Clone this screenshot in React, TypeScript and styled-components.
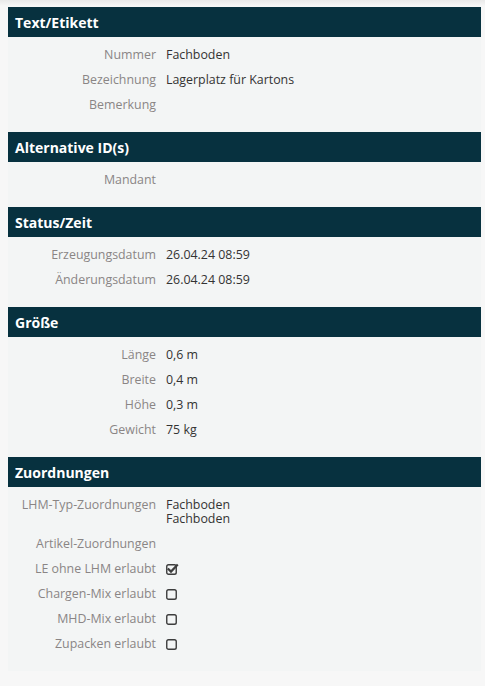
import styled, { createGlobalStyle } from "styled-components";

const GlobalStyle = createGlobalStyle`
  html, body {
    margin: 0;
    padding: 0;
  }
  body {
    background: linear-gradient(#e9e9e9 0px, #f7f7f7 6px, #f7f7f7 100%);
    font-family: "Open Sans", "Noto Sans", sans-serif;
    min-height: 100vh;
  }
`;

const Page = styled.div`
  padding: 7px 4px 0 8px;
`;

const Panel = styled.section`
  background: #f3f5f5;
`;

const Header = styled.h2`
  margin: 0;
  height: 30px;
  display: flex;
  align-items: center;
  padding: 0 7px;
  background: #07313f;
  color: #ffffff;
  font-size: 14px;
  font-weight: 700;
`;

const Body = styled.div`
  padding: 5px 0 15px;
`;

const Row = styled.div`
  display: grid;
  grid-template-columns: 148px 1fr;
  column-gap: 10px;
  padding: 6px 0 5px;
  font-size: 12.4px;
  line-height: 14px;
`;

const Label = styled.div`
  text-align: right;
  color: #8a8585;
`;

const Value = styled.div`
  color: #333333;
`;

const Box = styled.svg`
  display: block;
  margin-top: 1px;
`;

function CheckBox({ checked }: { checked: boolean }) {
  return (
    <Box width="14" height="12" viewBox="0 0 14 12">
      <rect
        x="0.75"
        y="1.75"
        width="9.5"
        height="9.5"
        rx="1.8"
        fill="none"
        stroke="#3d3d3d"
        strokeWidth="1.4"
      />
      {checked && (
        <path
          d="M2.6 6.2 L5 8.6 L11 2.4"
          fill="none"
          stroke="#3d3d3d"
          strokeWidth="2.2"
          strokeLinecap="square"
        />
      )}
    </Box>
  );
}

type Field = { label: string; value?: React.ReactNode };

const sections: { title: string; fields: Field[] }[] = [
  {
    title: "Text/Etikett",
    fields: [
      { label: "Nummer", value: "Fachboden" },
      { label: "Bezeichnung", value: "Lagerplatz für Kartons" },
      { label: "Bemerkung" },
    ],
  },
  {
    title: "Alternative ID(s)",
    fields: [{ label: "Mandant" }],
  },
  {
    title: "Status/Zeit",
    fields: [
      { label: "Erzeugungsdatum", value: "26.04.24 08:59" },
      { label: "Änderungsdatum", value: "26.04.24 08:59" },
    ],
  },
  {
    title: "Größe",
    fields: [
      { label: "Länge", value: "0,6 m" },
      { label: "Breite", value: "0,4 m" },
      { label: "Höhe", value: "0,3 m" },
      { label: "Gewicht", value: "75 kg" },
    ],
  },
  {
    title: "Zuordnungen",
    fields: [
      {
        label: "LHM-Typ-Zuordnungen",
        value: (
          <>
            Fachboden
            <br />
            Fachboden
          </>
        ),
      },
      { label: "Artikel-Zuordnungen" },
      { label: "LE ohne LHM erlaubt", value: <CheckBox checked /> },
      { label: "Chargen-Mix erlaubt", value: <CheckBox checked={false} /> },
      { label: "MHD-Mix erlaubt", value: <CheckBox checked={false} /> },
      { label: "Zupacken erlaubt", value: <CheckBox checked={false} /> },
    ],
  },
];

export default function App() {
  return (
    <>
      <GlobalStyle />
      <Page>
        {sections.map((s) => (
          <Panel key={s.title}>
            <Header>{s.title}</Header>
            <Body>
              {s.fields.map((f) => (
                <Row key={f.label}>
                  <Label>{f.label}</Label>
                  <Value>{f.value}</Value>
                </Row>
              ))}
            </Body>
          </Panel>
        ))}
      </Page>
    </>
  );
}
